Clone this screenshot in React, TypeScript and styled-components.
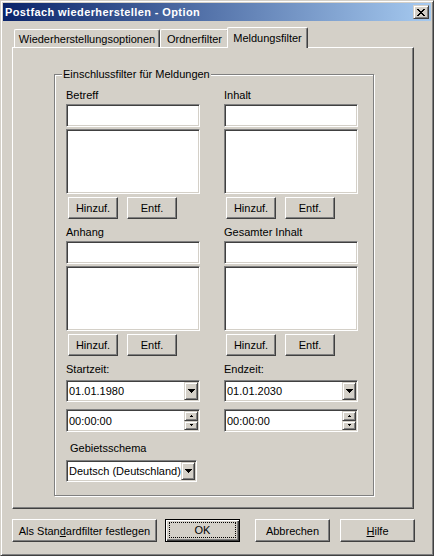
import React from 'react';
import styled, { createGlobalStyle, css } from 'styled-components';

const FACE = '#d4d0c8';
const SHADOW = '#808080';
const DARK = '#404040';

const GlobalStyle = createGlobalStyle`
  html, body {
    margin: 0;
    padding: 0;
    background: ${FACE};
  }
  body {
    width: 434px;
    height: 556px;
    overflow: hidden;
    font-family: "Liberation Sans", Arial, sans-serif;
    font-size: 11px;
    color: #000;
  }
  *, *::before, *::after { box-sizing: border-box; }
`;

const raised = css`
  border: 1px solid;
  border-color: #fff ${DARK} ${DARK} #fff;
  box-shadow: inset -1px -1px ${SHADOW}, inset 1px 1px ${FACE};
  background: ${FACE};
`;

const scrollRaised = css`
  border: 1px solid;
  border-color: ${FACE} ${DARK} ${DARK} ${FACE};
  box-shadow: inset 1px 1px #fff, inset -1px -1px ${SHADOW};
  background: ${FACE};
`;

const sunken = css`
  border: 1px solid;
  border-color: ${SHADOW} #fff #fff ${SHADOW};
  box-shadow: inset 1px 1px ${DARK}, inset -1px -1px ${FACE};
  background: #fff;
`;

const Window = styled.div`
  width: 434px;
  height: 556px;
  background: ${FACE};
  border: 1px solid;
  border-color: ${FACE} ${DARK} ${DARK} ${FACE};
  box-shadow: inset 1px 1px #fff, inset -1px -1px ${SHADOW};
  padding: 2px;
  display: flex;
  flex-direction: column;
`;

const TitleBar = styled.div`
  height: 18px;
  flex: none;
  display: flex;
  align-items: center;
  justify-content: space-between;
  padding: 0 2px 0 2px;
  background: linear-gradient(to right, #0a246a, #a6caf0);
`;

const TitleText = styled.span`
  color: #fff;
  font-weight: bold;
  font-size: 11px;
  letter-spacing: 0.4px;
  white-space: nowrap;
`;

const CloseButton = styled.div`
  ${scrollRaised};
  width: 16px;
  height: 14px;
  display: flex;
  align-items: center;
  justify-content: center;
`;

const Body = styled.div`
  padding: 6px 0 0 9px;
  display: flex;
  flex-direction: column;
`;

const TabStrip = styled.div`
  height: 20px;
  display: flex;
  align-items: flex-end;
  padding-left: 2px;
`;

const Tab = styled.div<{ $active?: boolean; $w: number }>`
  width: ${(p) => p.$w}px;
  height: ${(p) => (p.$active ? 21 : 18)}px;
  margin: ${(p) => (p.$active ? '0 -2px -1px -2px' : '0')};
  position: ${(p) => (p.$active ? 'relative' : 'static')};
  z-index: ${(p) => (p.$active ? 1 : 0)};
  background: ${FACE};
  border-top: 1px solid #fff;
  border-left: 1px solid #fff;
  border-right: 1px solid ${DARK};
  border-radius: 2px 2px 0 0;
  box-shadow: inset -1px 0 ${SHADOW};
  display: flex;
  justify-content: center;
  align-items: center;
  padding-top: ${(p) => (p.$active ? 0 : 1)}px;
  white-space: nowrap;
`;

const Panel = styled.div`
  width: 402px;
  height: 462px;
  border: 1px solid;
  border-color: #fff ${DARK} ${DARK} #fff;
  box-shadow: inset -1px -1px ${SHADOW};
  padding: 26px 0 0 41px;
`;

const GroupBox = styled.div`
  position: relative;
  width: 320px;
  height: 422px;
  border: 1px solid ${SHADOW};
  box-shadow: inset 1px 1px #fff, 1px 1px #fff;
  padding: 14px 0 0 11px;
`;

const GroupLegend = styled.span`
  position: absolute;
  top: -7px;
  left: 7px;
  padding: 0 1px;
  line-height: 13px;
  background: ${FACE};
  white-space: nowrap;
`;

const FieldGrid = styled.div`
  display: grid;
  grid-template-columns: 134px 134px;
  column-gap: 24px;
  row-gap: 7px;
  align-items: start;
`;

const Field = styled.div<{ $mt?: number }>`
  display: flex;
  flex-direction: column;
  margin-top: ${(p) => p.$mt ?? 0}px;
`;

const FieldLabel = styled.div<{ $mb: number; $indent?: number }>`
  height: 13px;
  line-height: 13px;
  margin-bottom: ${(p) => p.$mb}px;
  padding-left: ${(p) => p.$indent ?? 0}px;
  white-space: nowrap;
`;

const TextBox = styled.div`
  ${sunken};
  height: 23px;
`;

const ListBox = styled.div`
  ${sunken};
  height: 65px;
  margin-top: 2px;
  margin-bottom: 3px;
`;

const ButtonRow = styled.div`
  display: flex;
  gap: 9px;
  padding-left: 2px;
`;

const PushButton = styled.div<{ $w: number; $h?: number }>`
  ${raised};
  width: ${(p) => p.$w}px;
  height: ${(p) => p.$h ?? 22}px;
  display: flex;
  align-items: center;
  justify-content: center;
  white-space: nowrap;
`;

const ComboBox = styled.div<{ $w: number; $h?: number }>`
  ${sunken};
  width: ${(p) => p.$w}px;
  height: ${(p) => p.$h ?? 22}px;
  padding: 1px;
  display: flex;
  align-items: stretch;
`;

const ComboText = styled.div`
  flex: 1;
  display: flex;
  align-items: center;
  padding-left: 1px;
  white-space: nowrap;
  overflow: hidden;
`;

const DropButton = styled.div`
  ${scrollRaised};
  width: 14px;
  flex: none;
  display: flex;
  align-items: center;
  justify-content: center;
`;

const SpinStack = styled.div`
  width: 14px;
  flex: none;
  display: flex;
  flex-direction: column;
`;

const SpinButton = styled.div`
  ${scrollRaised};
  flex: 1;
  display: flex;
  align-items: center;
  justify-content: center;
`;

const Footer = styled.div`
  display: flex;
  margin-top: 10px;
`;

const FooterSlot = styled.div<{ $ml: number }>`
  margin-left: ${(p) => p.$ml}px;
`;

const DefaultButton = styled.div`
  width: 75px;
  height: 23px;
  border: 1px solid #000;
  box-shadow: inset 1px 1px #fff, inset -1px -1px ${DARK}, inset -2px -2px ${SHADOW};
  background: ${FACE};
  padding: 2px 3px 3px 3px;
  display: flex;
`;

const FocusRing = styled.div`
  flex: 1;
  border: 1px dotted #000;
  display: flex;
  align-items: center;
  justify-content: center;
`;

const CloseGlyph = () => (
  <svg width="8" height="7" viewBox="0 0 8 7" shapeRendering="crispEdges">
    <path
      d="M0 0h2v1H0zM6 0h2v1H6zM1 1h2v1H1zM5 1h2v1H5zM2 2h4v1H2zM3 3h2v1H3zM2 4h4v1H2zM1 5h2v1H1zM5 5h2v1H5zM0 6h2v1H0zM6 6h2v1H6z"
      fill="#000"
    />
  </svg>
);

const DownArrow = () => (
  <svg width="7" height="4" viewBox="0 0 7 4" shapeRendering="crispEdges">
    <path d="M0 0h7v1H0zM1 1h5v1H1zM2 2h3v1H2zM3 3h1v1H3z" fill="#000" />
  </svg>
);

const SmallArrow = ({ up }: { up?: boolean }) => (
  <svg width="3" height="2" viewBox="0 0 3 2" shapeRendering="crispEdges">
    <path d={up ? 'M1 0h1v1H1zM0 1h3v1H0z' : 'M0 0h3v1H0zM1 1h1v1H1z'} fill="#000" />
  </svg>
);

const FilterField = ({ label }: { label: string }) => (
  <Field>
    <FieldLabel $mb={2}>{label}</FieldLabel>
    <TextBox />
    <ListBox />
    <ButtonRow>
      <PushButton $w={50}>Hinzuf.</PushButton>
      <PushButton $w={50}>Entf.</PushButton>
    </ButtonRow>
  </Field>
);

const TimeField = ({ label, date }: { label: string; date: string }) => (
  <Field>
    <FieldLabel $mb={4}>{label}</FieldLabel>
    <ComboBox $w={134}>
      <ComboText>{date}</ComboText>
      <DropButton>
        <DownArrow />
      </DropButton>
    </ComboBox>
    <Field $mt={7}>
      <ComboBox $w={134} $h={23}>
        <ComboText>00:00:00</ComboText>
        <SpinStack>
          <SpinButton>
            <SmallArrow up />
          </SpinButton>
          <SpinButton>
            <SmallArrow />
          </SpinButton>
        </SpinStack>
      </ComboBox>
    </Field>
  </Field>
);

export default function App() {
  return (
    <>
      <GlobalStyle />
      <Window>
        <TitleBar>
          <TitleText>Postfach wiederherstellen - Option</TitleText>
          <CloseButton>
            <CloseGlyph />
          </CloseButton>
        </TitleBar>
        <Body>
          <TabStrip>
            <Tab $w={146}>Wiederherstellungsoptionen</Tab>
            <Tab $w={69}>Ordnerfilter</Tab>
            <Tab $w={81} $active>
              Meldungsfilter
            </Tab>
          </TabStrip>
          <Panel>
            <GroupBox>
              <GroupLegend>Einschlussfilter für Meldungen</GroupLegend>
              <FieldGrid>
                <FilterField label="Betreff" />
                <FilterField label="Inhalt" />
                <FilterField label="Anhang" />
                <FilterField label="Gesamter Inhalt" />
                <TimeField label="Startzeit:" date="01.01.1980" />
                <TimeField label="Endzeit:" date="01.01.2030" />
                <Field $mt={3}>
                  <FieldLabel $mb={5} $indent={4}>
                    Gebietsschema
                  </FieldLabel>
                  <ComboBox $w={131}>
                    <ComboText>Deutsch (Deutschland)</ComboText>
                    <DropButton>
                      <DownArrow />
                    </DropButton>
                  </ComboBox>
                </Field>
              </FieldGrid>
            </GroupBox>
          </Panel>
          <Footer>
            <FooterSlot $ml={0}>
              <PushButton $w={145} $h={23}>
                Als Stan<u>d</u>ardfilter festlegen
              </PushButton>
            </FooterSlot>
            <FooterSlot $ml={8}>
              <DefaultButton>
                <FocusRing>OK</FocusRing>
              </DefaultButton>
            </FooterSlot>
            <FooterSlot $ml={15}>
              <PushButton $w={75} $h={23}>
                Abbrechen
              </PushButton>
            </FooterSlot>
            <FooterSlot $ml={10}>
              <PushButton $w={75} $h={23}>
                <u>H</u>ilfe
              </PushButton>
            </FooterSlot>
          </Footer>
        </Body>
      </Window>
    </>
  );
}
